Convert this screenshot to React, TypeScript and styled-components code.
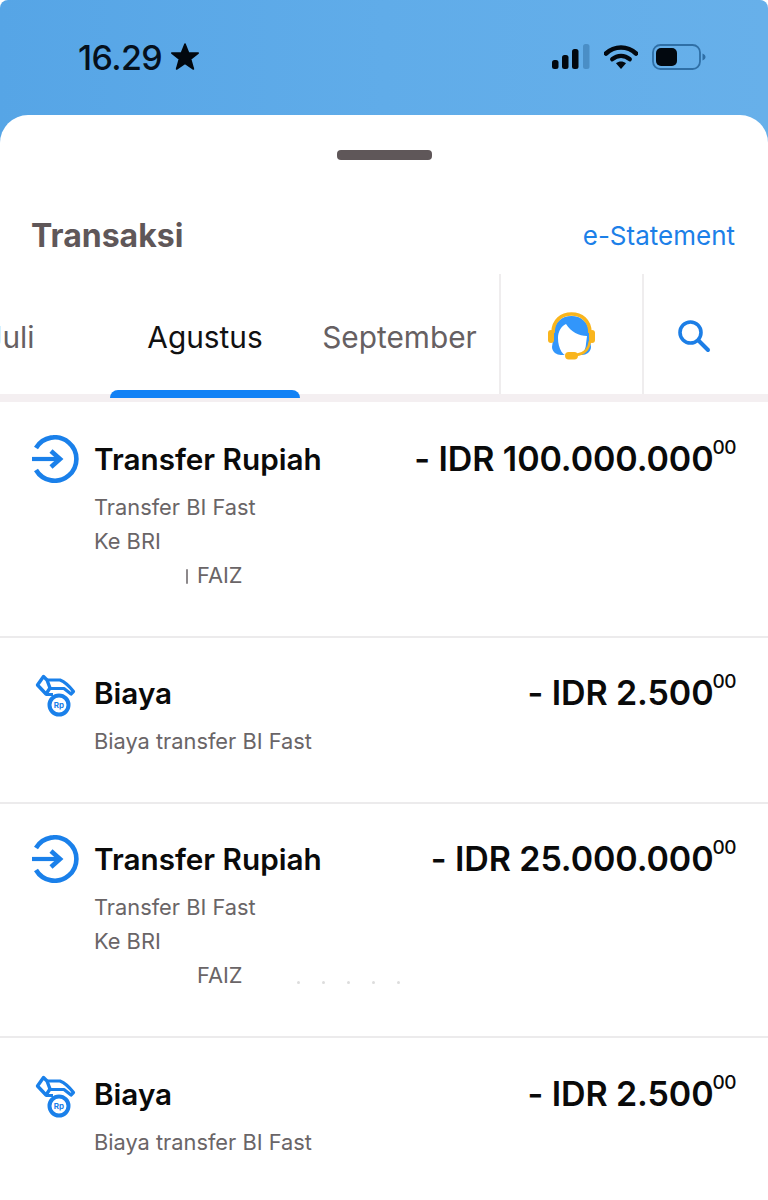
import { FunctionComponent } from "react";
import styled, { createGlobalStyle } from "styled-components";

const GlobalStyle = createGlobalStyle`
    html, body {
        margin: 0;
        padding: 0;
        background-color: #ffffff;
    }

    body {
        font-family: Inter, "Liberation Sans", sans-serif;
    }
`;

const Page = styled.div`
    width: 768px;
    height: 1200px;
    overflow: hidden;
    background-color: #ffffff;
`;

const StatusBar = styled.div`
    height: 145px;
    box-sizing: border-box;
    padding: 37px 62px 0 78px;
    display: flex;
    align-items: flex-start;
    justify-content: space-between;
    background: linear-gradient(90deg, #56a5e6 0%, #60ace9 50%, #67b0ea 100%);
    border-radius: 8px 8px 0 0;
`;

const Clock = styled.div`
    display: flex;
    align-items: center;
    gap: 8px;
    height: 40px;
    font-size: 34px;
    font-weight: 500;
    letter-spacing: -0.6px;
    color: #05101c;
`;

const StatusIcons = styled.div`
    display: flex;
    align-items: center;
    gap: 14px;
    height: 40px;
`;

const Sheet = styled.div`
    margin-top: -30px;
    background-color: #ffffff;
    border-radius: 28px 28px 0 0;
    position: relative;
    padding-top: 35px;
    height: 1085px;
    box-sizing: border-box;
`;

const Handle = styled.div`
    width: 95px;
    height: 10px;
    margin: 0 auto;
    background-color: #5f5759;
    border-radius: 4px;
`;

const TitleRow = styled.div`
    display: flex;
    align-items: center;
    justify-content: space-between;
    height: 44px;
    margin-top: 53px;
    padding: 0 33px 0 31px;
`;

const Title = styled.div`
    font-size: 32px;
    font-weight: 700;
    color: #5f5759;
`;

const StatementLink = styled.a`
    font-size: 26px;
    color: #1c80e8;
`;

const TabBar = styled.div`
    display: flex;
    height: 120px;
    margin-top: 17px;
    border-bottom: 8px solid #f4eff1;
`;

const MonthTabs = styled.div`
    display: flex;
    justify-content: flex-end;
    width: 499px;
    height: 124px;
    overflow: hidden;
    flex-shrink: 0;
`;

const MonthTab = styled.div<{ $active?: boolean; $width: number }>`
    position: relative;
    display: flex;
    align-items: center;
    justify-content: center;
    flex-shrink: 0;
    width: ${props => props.$width}px;
    padding-top: 2px;
    box-sizing: border-box;
    font-size: 29.8px;
    color: ${props => (props.$active ? "#111111" : "#666062")};

    &::after {
        content: "";
        display: ${props => (props.$active ? "block" : "none")};
        position: absolute;
        left: 0;
        right: 0;
        bottom: 0;
        height: 8px;
        background-color: #1181f5;
        border-radius: 8px 8px 0 0;
    }
`;

const IconTab = styled.div<{ $width: number; $inset?: number }>`
    display: flex;
    align-items: center;
    justify-content: center;
    width: ${props => props.$width}px;
    padding: 4px ${props => props.$inset ?? 0}px 0 0;
    box-sizing: border-box;
    border-left: 2px solid #efedee;
`;

const List = styled.div`
    padding-top: 2px;
`;

const Row = styled.div<{ $last?: boolean }>`
    display: grid;
    grid-template-columns: 62px 1fr auto;
    align-items: start;
    padding: ${props => (props.$last ? 36 : 35)}px 32px 44px 31px;
    border-bottom: ${props => (props.$last ? "none" : "2px solid #ecebec")};
`;

const RowIcon = styled.div`
    height: 40px;
    display: flex;
    align-items: center;
`;

const RowBody = styled.div`
    min-width: 0;
    padding-left: 1px;
`;

const RowTitle = styled.div`
    height: 40px;
    line-height: 40px;
    font-size: 29.7px;
    font-weight: 600;
    color: #0a0a0a;
`;

const Details = styled.div`
    margin-top: 11px;
`;

const Detail = styled.div`
    display: flex;
    align-items: center;
    height: 34px;
    line-height: 34px;
    font-size: 21.8px;
    color: #6a6567;
`;

const Redacted = styled.span`
    display: flex;
    align-items: center;
    width: 103px;
    height: 34px;
    flex-shrink: 0;
`;

const RedactEdge = styled.span`
    display: block;
    width: 2px;
    height: 15px;
    margin: 2px 0 0 92px;
    background-color: #8d898b;
    border-radius: 2px;
`;

const SpeckRow = styled.span`
    display: flex;
    align-items: center;
    gap: 22px;
    margin: 14px 0 0 54px;
`;

const Speck = styled.span`
    display: block;
    width: 3px;
    height: 3px;
    background-color: #dddddd;
    border-radius: 50%;
`;

const Amount = styled.div`
    display: flex;
    align-items: flex-start;
    height: 40px;
    line-height: 40px;
    font-size: 34px;
    font-weight: 600;
    letter-spacing: -0.1px;
    color: #0a0a0a;
    white-space: nowrap;
`;

const Cents = styled.span`
    font-size: 19px;
    line-height: 24px;
    font-weight: 500;
    margin: -3px 0 0 -1px;
    letter-spacing: -0.5px;
`;

const SignalIcon = () => (
    <svg width="38" height="26" viewBox="0 0 38 26">
        <rect x="0" y="16" width="6.5" height="9" rx="2.5" fill="#02080f" />
        <rect x="10" y="11" width="6.5" height="14" rx="2.5" fill="#02080f" />
        <rect x="20" y="5" width="6.5" height="20" rx="2.5" fill="#02080f" />
        <rect x="31" y="0" width="6.5" height="25" rx="2.5" fill="#4a8ec6" />
    </svg>
);

const WifiIcon = () => (
    <svg width="34" height="26" viewBox="0 0 34 26">
        <path d="M2 9.5C10.5 1.5 23.5 1.5 32 9.5" fill="none" stroke="#02080f" strokeWidth="4.6" strokeLinecap="round" />
        <path d="M8.3 15.2C13.4 10.8 20.6 10.8 25.7 15.2" fill="none" stroke="#02080f" strokeWidth="4.4" strokeLinecap="round" />
        <path d="M12 19.2C15 16.8 19 16.8 22 19.2L17 25Z" fill="#02080f" />
    </svg>
);

const BatteryIcon = () => (
    <svg width="54" height="26" viewBox="0 0 54 26">
        <rect x="1" y="1" width="47" height="24" rx="7.5" fill="none" stroke="#2f6fa6" strokeWidth="1.8" />
        <rect x="4" y="4" width="21" height="18" rx="5" fill="#02080f" />
        <path d="M50.5 9.5C52.5 10.5 53.5 11.5 53.5 13C53.5 14.5 52.5 15.5 50.5 16.5Z" fill="#2f6fa6" />
    </svg>
);

const StarIcon = () => (
    <svg width="30" height="30" viewBox="0 0 30 30">
        <path
            d="M15 2L18.6 11H28.2L20.6 17L23.4 27L15 21.3L6.6 27L9.4 17L1.8 11H11.4Z"
            fill="#02080f"
            stroke="#02080f"
            strokeWidth="1.6"
            strokeLinejoin="round"
        />
    </svg>
);

const AgentIcon = () => (
    <svg width="48" height="50" viewBox="0 0 48 50">
        <path d="M6 22C6 11 14 5 23.5 5C33 5 41 11 41 22L43 36C43 41 38 44 34 44H13C9 44 4 41 4 36Z" fill="#3296fb" />
        <path d="M18 13C13 15 10 21 10 27C10 38 15 46 23 46C31 46 38 41 38 33L39 25C31 25 23 21 18 13Z" fill="#ffffff" />
        <path d="M5 22C5 9 14 3 23.5 3C33 3 42 9 42 22" fill="none" stroke="#f9b51d" strokeWidth="3.6" />
        <rect x="0" y="19" width="6" height="13" rx="3" fill="#f9b51d" />
        <rect x="41" y="19" width="6" height="13" rx="3" fill="#f9b51d" />
        <path d="M42 30C41 38 36 43 28 44" fill="none" stroke="#f9b51d" strokeWidth="2.4" />
        <rect x="17" y="41" width="13" height="7.5" rx="3.7" fill="#f9b51d" />
    </svg>
);

const SearchIcon = () => (
    <svg width="34" height="34" viewBox="0 0 34 34">
        <circle cx="13.5" cy="13.5" r="10.5" fill="none" stroke="#1c7ee6" strokeWidth="3.6" />
        <path d="M21.5 21.5L31 31" fill="none" stroke="#1c7ee6" strokeWidth="4" strokeLinecap="round" />
    </svg>
);

const TransferIcon = () => (
    <svg width="48" height="48" viewBox="0 0 48 48">
        <path d="M5 13A21.7 21.7 0 1 1 5 35" fill="none" stroke="#1a80ea" strokeWidth="4.6" />
        <path d="M1 24H29" fill="none" stroke="#1a80ea" strokeWidth="4.2" />
        <path d="M20 16L29 24L20 32" fill="none" stroke="#1a80ea" strokeWidth="4.6" />
    </svg>
);

const FeeIcon = () => (
    <svg width="42" height="44" viewBox="0 0 42 44" style={{ marginLeft: 4, marginTop: 6 }}>
        <path d="M8.5 2.5L2.5 11L11 20L15 14L12 6Z" fill="none" stroke="#1a80ea" strokeWidth="3.4" strokeLinejoin="round" />
        <path d="M12 6H25C30 8 35 13 38.5 17.5L36 20L29 14.5H15" fill="none" stroke="#1a80ea" strokeWidth="3.2" strokeLinejoin="round" />
        <path d="M11 20.5H18" fill="none" stroke="#1a80ea" strokeWidth="3" />
        <circle cx="24" cy="31" r="9.5" fill="#ffffff" stroke="#1a80ea" strokeWidth="4" />
        <text x="24" y="34" textAnchor="middle" fontSize="8" fontWeight="700" fontFamily="Inter, sans-serif" fill="#1a80ea">
            Rp
        </text>
    </svg>
);

const Specks = () => (
    <SpeckRow>
        {[0, 1, 2, 3, 4].map(index => (<Speck key={index} />))}
    </SpeckRow>
);

interface Transaction {
    id: string;
    kind: "transfer" | "fee";
    title: string;
    amount: string;
    mark?: "edge" | "specks";
}

const transactions: Transaction[] = [
    { id: "t1", kind: "transfer", title: "Transfer Rupiah", amount: "- IDR 100.000.000", mark: "edge" },
    { id: "f1", kind: "fee", title: "Biaya", amount: "- IDR 2.500" },
    { id: "t2", kind: "transfer", title: "Transfer Rupiah", amount: "- IDR 25.000.000", mark: "specks" },
    { id: "f2", kind: "fee", title: "Biaya", amount: "- IDR 2.500" },
];

const App: FunctionComponent = () => (
    <Page>
        <GlobalStyle />
        <StatusBar>
            <Clock>
                16.29
                <StarIcon />
            </Clock>
            <StatusIcons>
                <SignalIcon />
                <WifiIcon />
                <BatteryIcon />
            </StatusIcons>
        </StatusBar>
        <Sheet>
            <Handle />
            <TitleRow>
                <Title>Transaksi</Title>
                <StatementLink>e-Statement</StatementLink>
            </TitleRow>
            <TabBar>
                <MonthTabs>
                    <MonthTab $width={200}>Juli</MonthTab>
                    <MonthTab $width={190} $active>Agustus</MonthTab>
                    <MonthTab $width={199}>September</MonthTab>
                </MonthTabs>
                <IconTab $width={143}><AgentIcon /></IconTab>
                <IconTab $width={126} $inset={24}><SearchIcon /></IconTab>
            </TabBar>
            <List>
                {transactions.map((item, index) => (
                    <Row key={item.id} $last={index === transactions.length - 1}>
                        <RowIcon>
                            {item.kind === "transfer" ? <TransferIcon /> : <FeeIcon />}
                        </RowIcon>
                        <RowBody>
                            <RowTitle>{item.title}</RowTitle>
                            {item.kind === "transfer" ? (
                                <Details>
                                    <Detail>Transfer BI Fast</Detail>
                                    <Detail>Ke BRI</Detail>
                                    <Detail>
                                        <Redacted>{item.mark === "edge" && <RedactEdge />}</Redacted>
                                        FAIZ
                                        {item.mark === "specks" && <Specks />}
                                    </Detail>
                                </Details>
                            ) : (
                                <Details>
                                    <Detail>Biaya transfer BI Fast</Detail>
                                </Details>
                            )}
                        </RowBody>
                        <Amount>
                            {item.amount}
                            <Cents>00</Cents>
                        </Amount>
                    </Row>
                ))}
            </List>
        </Sheet>
    </Page>
);

export default App;
